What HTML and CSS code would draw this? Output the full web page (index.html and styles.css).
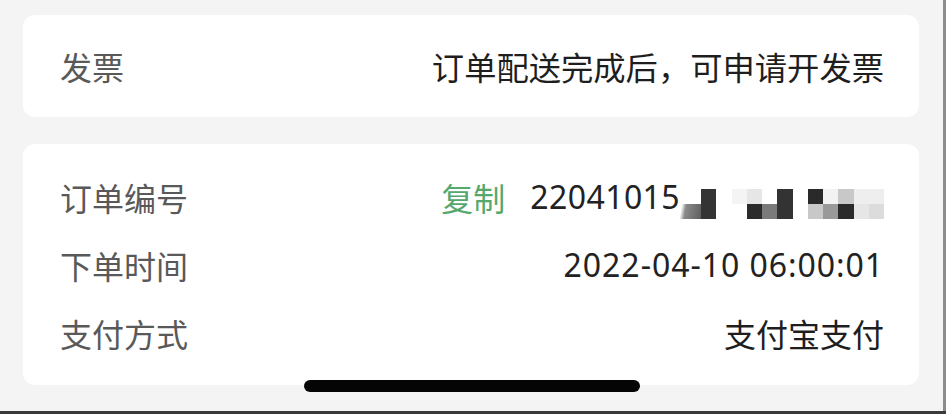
FILE: index.html
```html
<!DOCTYPE html>
<html lang="zh-CN">
<head>
<meta charset="utf-8">
<title>订单详情</title>
<link rel="stylesheet" href="styles.css">
</head>
<body>
<div class="screen">
  <section class="card card-invoice">
    <div class="row">
      <span class="label">发票</span>
      <span class="value">订单配送完成后，可申请开发票</span>
    </div>
  </section>
  <section class="card card-order">
    <div class="row">
      <span class="label">订单编号</span>
      <span class="value order-no">
        <span class="copy">复制</span>
        <span class="num">22041015</span>
        <span class="mosaic">
          <i class="m m1a"></i><i class="m m2a"></i><i class="m m3a"></i><i class="m m4a"></i><i class="m m5a"></i><i class="m m6a"></i><i class="m m7a"></i><i class="m m8a"></i><i class="m m9a"></i><i class="m m10a"></i><i class="m m11a"></i><i class="m m12a"></i><i class="m m13a"></i>
          <i class="m m1b"></i><i class="m m2b"></i><i class="m m3b"></i><i class="m m4b"></i><i class="m m5b"></i><i class="m m6b"></i><i class="m m7b"></i><i class="m m8b"></i><i class="m m9b"></i><i class="m m10b"></i><i class="m m11b"></i><i class="m m12b"></i><i class="m m13b"></i>
        </span>
      </span>
    </div>
    <div class="row">
      <span class="label">下单时间</span>
      <span class="value num date">2022-04-10 06:00:01</span>
    </div>
    <div class="row">
      <span class="label">支付方式</span>
      <span class="value">支付宝支付</span>
    </div>
  </section>
  <div class="home-indicator"></div>
</div>
</body>
</html>
```

FILE: styles.css
```css
* { box-sizing: border-box; }
html, body { margin: 0; padding: 0; }
body {
  width: 946px;
  height: 414px;
  overflow: hidden;
  background: #3a3a3a;
  font-family: "Noto Sans", "Noto Sans CJK SC", sans-serif;
}
.screen {
  position: relative;
  width: 943px;
  height: 411px;
  background: #f4f4f4;
  padding: 15px 24px 0 23px;
  display: flex;
  flex-direction: column;
  gap: 27px;
  box-shadow: 3px 0 0 #8c8c8c;
}
.card {
  background: #ffffff;
  border-radius: 12px;
  padding: 0 35px 0 37px;
}
.card-invoice {
  height: 102px;
  display: flex;
  align-items: center;
}
.card-invoice .row { flex: 1; }
.card-invoice .value { font-size: 32.3px; }
.card-order {
  height: 241px;
  padding-top: 19px;
  padding-bottom: 18px;
}
.row {
  display: flex;
  align-items: center;
  justify-content: space-between;
  height: 68px;
  font-size: 32px;
  line-height: 40px;
}
.label {
  color: #595959;
  font-family: "Noto Sans CJK SC", sans-serif;
}
.value {
  color: #1e1e1e;
  font-family: "Noto Sans CJK SC", sans-serif;
}
.num {
  font-family: "Noto Sans", "Noto Sans CJK SC", sans-serif;
  letter-spacing: 0.4px;
  color: #222222;
}
.date { letter-spacing: 0.95px; }
.order-no {
  display: flex;
  align-items: center;
}
.copy {
  color: #55a86c;
  margin-right: 25px;
}
.mosaic {
  display: grid;
  grid-template-columns: 22px repeat(12, 15.25px);
  grid-template-rows: 15px 15px;
  margin-left: -1px;
  margin-top: 14px;
}
.m { display: block; background: #ffffff; }
.m1b { background: linear-gradient(100deg, transparent 12%, #8a8a8a 30%, #5e5e5e 100%); }
.m2a, .m2b { background: #343434; }
.m4a { background: #f4f4f4; }
.m5a { background: #e6e6e6; }
.m5b { background: #2b2b2b; }
.m6b { background: #7a7a7a; }
.m7a, .m7b { background: #333333; }
.m9a { background: #2a2a2a; }
.m9b { background: #c8c8c8; }
.m10a { background: #f2f2f2; }
.m10b { background: #999999; }
.m11a { background: #c8c8c8; }
.m11b { background: #2a2a2a; }
.m12a { background: #eeeeee; }
.m12b { background: #e6e6e6; }
.m13a { background: #eeeeee; }
.m13b { background: #dcdcdc; }
.home-indicator {
  position: absolute;
  left: 304px;
  top: 380px;
  width: 336px;
  height: 12px;
  border-radius: 6px;
  background: #050505;
}
```
